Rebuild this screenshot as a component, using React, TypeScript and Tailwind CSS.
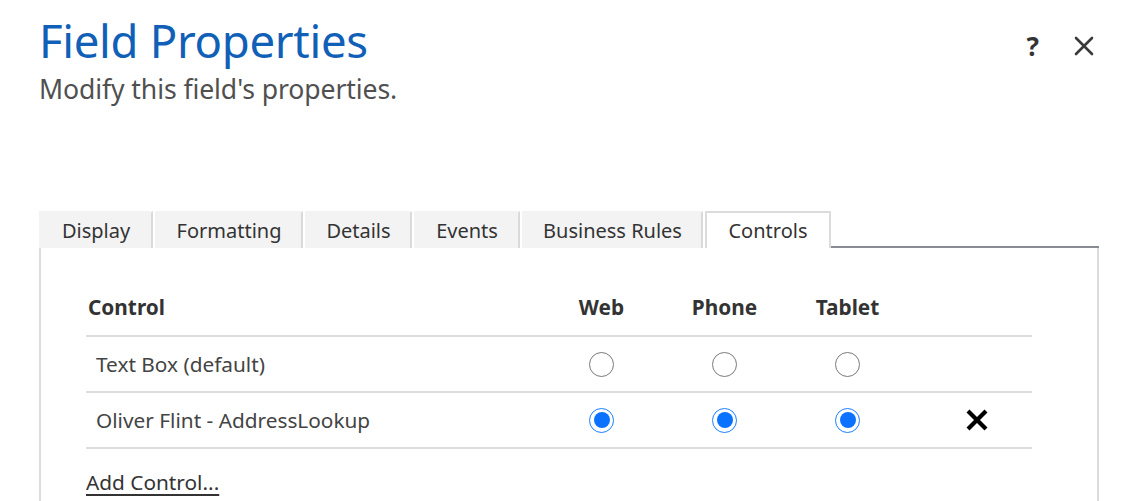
import React from 'react';

const TABS: { label: string; width: string }[] = [
  { label: 'Display', width: 'w-[114px]' },
  { label: 'Formatting', width: 'w-[148px]' },
  { label: 'Details', width: 'w-[107px]' },
  { label: 'Events', width: 'w-[106px]' },
  { label: 'Business Rules', width: 'w-[181px]' },
  { label: 'Controls', width: 'w-[126px]' },
];

interface ControlRow {
  name: string;
  selected: boolean;
  removable: boolean;
}

const ROWS: ControlRow[] = [
  { name: 'Text Box (default)', selected: false, removable: false },
  { name: 'Oliver Flint - AddressLookup', selected: true, removable: true },
];

function Radio({ checked }: { checked: boolean }) {
  return checked ? (
    <span className="flex items-center justify-center w-[25px] h-[25px] rounded-full border border-[#1a7fff] bg-white">
      <span className="block w-[16px] h-[16px] rounded-full bg-[#0a72ff]" />
    </span>
  ) : (
    <span className="block w-[25px] h-[25px] rounded-full border border-[#7a7a7a] bg-white" />
  );
}

function Tab({ label, width, active }: { label: string; width: string; active: boolean }) {
  return (
    <div
      className={`flex items-center justify-center h-[37px] ${width} border-2 border-b-0 text-[20px] text-[#333] ${
        active
          ? 'bg-white border-[#dcdcdc]'
          : 'mr-[2px] bg-[#f3f3f3] border-[#f3f3f3] border-r-[#dadada]'
      }`}
    >
      {label}
    </div>
  );
}

export default function App() {
  return (
    <div
      className="w-[1136px] h-[501px] overflow-hidden bg-white"
      style={{ fontFamily: '"Segoe UI", "Noto Sans", "Open Sans", sans-serif' }}
    >
      {/* Header */}
      <div className="flex justify-between pl-[39px] pr-[42px] pt-[9px]">
        <div>
          <h1 className="text-[45.5px] leading-[62px] text-[#1160b7] tracking-[-0.3px]">
            Field Properties
          </h1>
          <p className="text-[26.6px] leading-[36px] text-[#505050] tracking-[-0.1px]">
            Modify this field's properties.
          </p>
        </div>
        <div className="flex items-center gap-[35px] h-[74px] text-[#333]">
          <span className="text-[26px] font-bold leading-none">?</span>
          <svg width="20" height="20" viewBox="0 0 20 20" fill="none">
            <path d="M2 2L18 18M18 2L2 18" stroke="#3a3a3a" strokeWidth="2.6" strokeLinecap="round" />
          </svg>
        </div>
      </div>

      {/* Tabs + panel */}
      <div className="ml-[39px] w-[1060px] mt-[104px]">
        <div className="flex items-end">
          {TABS.map((t) => (
            <Tab key={t.label} label={t.label} width={t.width} active={t.label === 'Controls'} />
          ))}
          <div className="flex-1 border-b-2 border-[#898c93]" />
        </div>
        <div className="border-l-2 border-r-2 border-[#dcdcdc] pl-[45px] pr-[65px] pb-4">
          <div className="grid grid-cols-[454px_123px_123px_123px_1fr] text-[#444]">
            <div className="pl-[2px] pt-[45px] pb-[14px] border-b-2 border-[#dcdcdc] text-[20.8px] font-bold text-[#333] leading-[28px]">
              Control
            </div>
            {['Web', 'Phone', 'Tablet'].map((h) => (
              <div
                key={h}
                className="pt-[45px] pb-[14px] border-b-2 border-[#dcdcdc] text-[20.8px] font-bold text-[#333] leading-[28px] text-center"
              >
                {h}
              </div>
            ))}
            <div className="border-b-2 border-[#dcdcdc]" />

            {ROWS.map((r) => (
              <React.Fragment key={r.name}>
                <div className="flex items-center h-[56px] pl-[10px] pt-[2px] border-b-2 border-[#dcdcdc] text-[20.8px]">
                  {r.name}
                </div>
                {[0, 1, 2].map((i) => (
                  <div key={i} className="flex items-center justify-center h-[56px] border-b-2 border-[#dcdcdc]">
                    <Radio checked={r.selected} />
                  </div>
                ))}
                <div className="flex items-center justify-center h-[56px] pl-3 border-b-2 border-[#dcdcdc]">
                  {r.removable && (
                    <svg width="24" height="24" viewBox="0 0 24 24" fill="none">
                      <path d="M3 3L21 21M21 3L3 21" stroke="#000" strokeWidth="4.2" />
                    </svg>
                  )}
                </div>
              </React.Fragment>
            ))}
          </div>
          <div className="mt-[19px] text-[20.8px] text-[#333] underline underline-offset-[4px] leading-[28px]">
            Add Control...
          </div>
        </div>
      </div>
    </div>
  );
}
